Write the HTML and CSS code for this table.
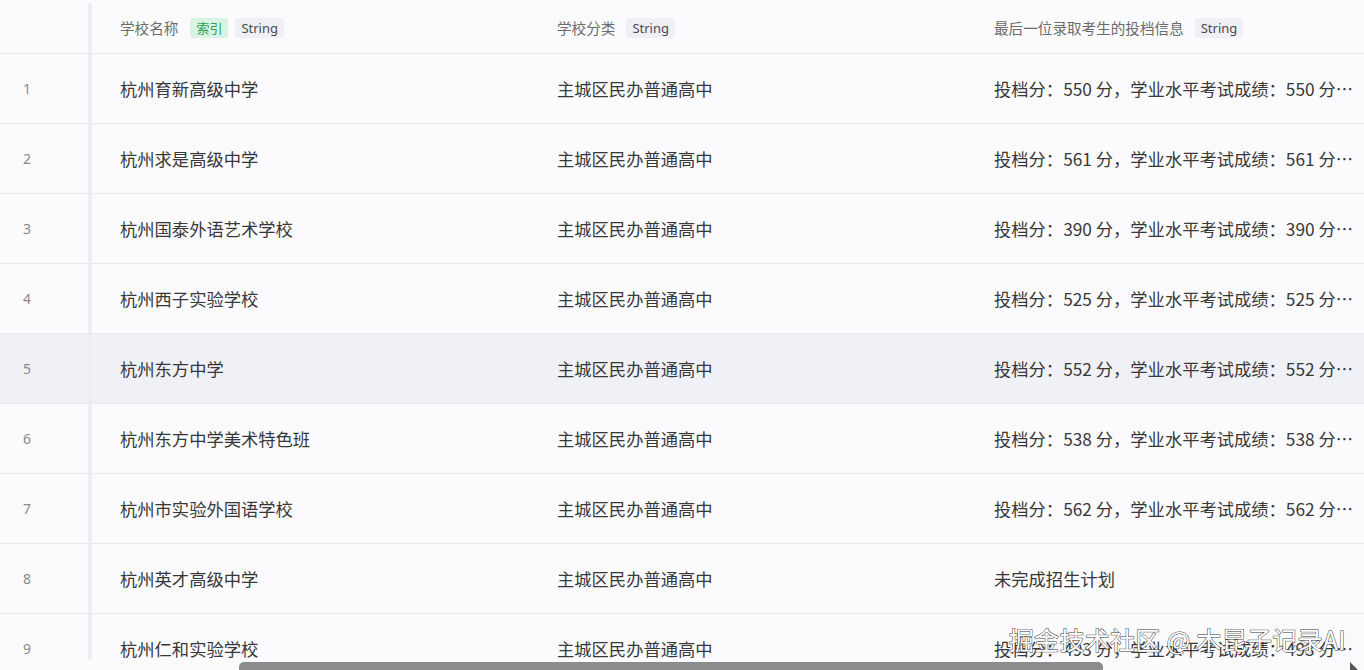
FILE: index.html
```html
<!DOCTYPE html>
<html lang="zh">
<head>
<meta charset="utf-8">
<link rel="stylesheet" href="styles.css">
</head>
<body>
<div class="page">
  <div class="viewport">
    <div class="table">
      <div class="row head">
        <div class="idx"></div>
        <div class="bar top"></div>
        <div class="cell"><span class="htext">学校名称</span><span class="tag green">索引</span><span class="tag">String</span></div>
        <div class="cell"><span class="htext">学校分类</span><span class="tag">String</span></div>
        <div class="cell last"><span class="htext">最后一位录取考生的投档信息</span><span class="tag">String</span></div>
      </div>
      <div class="row"><div class="idx">1</div><div class="bar"></div><div class="cell">杭州育新高级中学</div><div class="cell">主城区民办普通高中</div><div class="cell last"><span class="ell">投档分：550 分，学业水平考试成绩：550 分，综合素质评价：A</span></div></div>
      <div class="row"><div class="idx">2</div><div class="bar"></div><div class="cell">杭州求是高级中学</div><div class="cell">主城区民办普通高中</div><div class="cell last"><span class="ell">投档分：561 分，学业水平考试成绩：561 分，综合素质评价：A</span></div></div>
      <div class="row"><div class="idx">3</div><div class="bar"></div><div class="cell">杭州国泰外语艺术学校</div><div class="cell">主城区民办普通高中</div><div class="cell last"><span class="ell">投档分：390 分，学业水平考试成绩：390 分，综合素质评价：A</span></div></div>
      <div class="row"><div class="idx">4</div><div class="bar"></div><div class="cell">杭州西子实验学校</div><div class="cell">主城区民办普通高中</div><div class="cell last"><span class="ell">投档分：525 分，学业水平考试成绩：525 分，综合素质评价：A</span></div></div>
      <div class="row hover"><div class="idx">5</div><div class="bar"></div><div class="cell">杭州东方中学</div><div class="cell">主城区民办普通高中</div><div class="cell last"><span class="ell">投档分：552 分，学业水平考试成绩：552 分，综合素质评价：A</span></div></div>
      <div class="row"><div class="idx">6</div><div class="bar"></div><div class="cell">杭州东方中学美术特色班</div><div class="cell">主城区民办普通高中</div><div class="cell last"><span class="ell">投档分：538 分，学业水平考试成绩：538 分，综合素质评价：A</span></div></div>
      <div class="row"><div class="idx">7</div><div class="bar"></div><div class="cell">杭州市实验外国语学校</div><div class="cell">主城区民办普通高中</div><div class="cell last"><span class="ell">投档分：562 分，学业水平考试成绩：562 分，综合素质评价：A</span></div></div>
      <div class="row"><div class="idx">8</div><div class="bar"></div><div class="cell">杭州英才高级中学</div><div class="cell">主城区民办普通高中</div><div class="cell last"><span class="ell">未完成招生计划</span></div></div>
      <div class="row"><div class="idx">9</div><div class="bar"></div><div class="cell">杭州仁和实验学校</div><div class="cell">主城区民办普通高中</div><div class="cell last"><span class="ell">投档分：493 分，学业水平考试成绩：493 分，综合素质评价：A</span></div></div>
    </div>
  </div>
  <div class="scrollbar">
    <div class="thumb"></div>
    <div class="arrow"></div>
  </div>
  <div class="watermark">掘金技术社区 @ 木昆子记录AI</div>
</div>
</body>
</html>
```
FILE: styles.css
```css
* { box-sizing: border-box; }
html, body { margin: 0; padding: 0; }
body {
  width: 1364px;
  height: 670px;
  overflow: hidden;
  background: #fbfbfd;
  font-family: "Noto Sans CJK SC", "Noto Sans", sans-serif;
  color: #383838;
}
.page {
  position: relative;
  width: 1364px;
  height: 670px;
  display: flex;
  flex-direction: column;
}
.viewport {
  height: 660px;
  overflow: hidden;
}
.table {
  display: flex;
  flex-direction: column;
}
.row {
  display: grid;
  grid-template-columns: 88px 4px 437px 437px 398px;
  height: 70px;
  border-bottom: 1px solid #e9e9ee;
  align-items: center;
}
.row.head {
  height: 54px;
  padding-top: 2px;
}
.row.hover {
  background: #f0f1f6;
}
.idx {
  font-size: 14px;
  color: #8a8a8a;
  padding-left: 23px;
  font-family: "Noto Sans", "Noto Sans CJK SC", sans-serif;
}
.bar {
  align-self: stretch;
  background: #eeeef2;
}
.head .bar.top {
  margin-top: 1px;
}
.cell {
  padding-left: 28px;
  font-size: 17.3px;
  white-space: nowrap;
  overflow: hidden;
  display: flex;
  align-items: center;
}
.cell.last {
  padding-right: 2px;
}
.ell {
  display: block;
  overflow: hidden;
  text-overflow: ellipsis;
  white-space: nowrap;
  min-width: 0;
}
.head .cell {
  font-size: 14.6px;
  color: #6b6b6b;
}
.htext {
  margin-right: 11px;
}
.tag {
  display: inline-block;
  height: 20px;
  line-height: 20px;
  padding: 0 6px;
  font-size: 13px;
  border-radius: 3px;
  background: #eff0f5;
  color: #4a4a52;
  margin-right: 7px;
  font-family: "Noto Sans", "Noto Sans CJK SC", sans-serif;
}
.tag.green {
  background: #d9f4e2;
  color: #2e9e50;
  font-family: "Noto Sans CJK SC", sans-serif;
  margin-left: 1px;
}
.scrollbar {
  height: 10px;
  display: flex;
  align-items: flex-end;
  position: relative;
}
.thumb {
  margin-left: 239px;
  width: 864px;
  height: 8px;
  background: #8c8c8c;
  border-radius: 5px 5px 0 0;
}
.arrow {
  position: absolute;
  right: 6px;
  bottom: 0;
  width: 0;
  height: 0;
  border-left: 8px solid #555;
  border-top: 8px solid transparent;
}
.watermark {
  position: absolute;
  right: 18px;
  bottom: 16px;
  font-size: 25px;
  line-height: 30px;
  color: #ffffff;
  -webkit-text-stroke: 1px #3a3a3a;
  paint-order: stroke fill;
  letter-spacing: 0.3px;
  font-family: "Noto Sans CJK SC", sans-serif;
  white-space: nowrap;
}
```
